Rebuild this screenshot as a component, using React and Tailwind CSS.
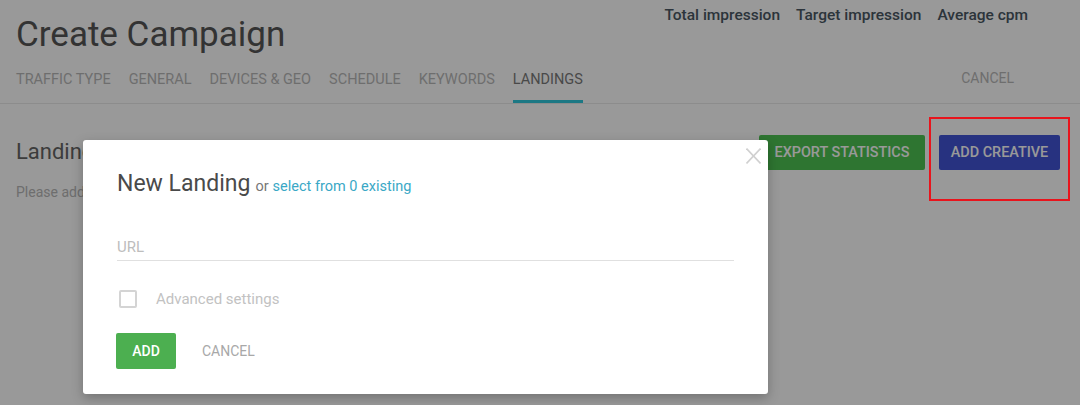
import React from "react";

const tabs = ["TRAFFIC TYPE", "GENERAL", "DEVICES & GEO", "SCHEDULE", "KEYWORDS", "LANDINGS"];

export default function App() {
  return (
    <div className="relative w-[1080px] h-[405px] overflow-hidden bg-white font-['Roboto',sans-serif]">
      {/* Header */}
      <div className="flex justify-between border-b border-[#e9e9e9] pl-4">
        <div className="flex flex-col">
          <h1 className="pt-[17px] text-[35px] leading-[36px] text-[#555] font-normal">Create Campaign</h1>
          <div className="mt-[17px] flex gap-[18px]">
            {tabs.map((t) => (
              <div
                key={t}
                className={
                  t === "LANDINGS"
                    ? "text-[14.5px] leading-[20px] pb-[10px] border-b-[3px] border-[#30c8dc] text-[#7a7a7a]"
                    : "text-[14.5px] leading-[20px] pb-[10px] border-b-[3px] border-transparent text-[#b8b8b8]"
                }
              >
                {t}
              </div>
            ))}
          </div>
        </div>
        <div className="flex flex-col items-end pr-[52px] pt-[5px]">
          <div className="flex gap-4 text-[15.5px] leading-[20px] font-medium text-[#4a5863]">
            <span>Total impression</span>
            <span>Target impression</span>
            <span>Average cpm</span>
          </div>
          <button className="mt-[43px] mr-[14px] text-[14px] leading-[20px] text-[#b8b8b8]">CANCEL</button>
        </div>
      </div>

      {/* Section */}
      <div className="flex justify-between pl-4 pr-5 pt-[31px]">
        <div className="flex flex-col">
          <h2 className="mt-[3px] text-[22px] leading-[28px] text-[#646464]">Landings</h2>
          <p className="mt-[16px] text-[14px] leading-[20px] text-[#b7b7b7]">Please add landings</p>
        </div>
        <div className="flex gap-[14px]">
          <button className="w-[166px] h-[35px] rounded-[2px] bg-[#4ec453] text-white text-[14.4px] font-medium">EXPORT STATISTICS</button>
          <button className="w-[121px] h-[35px] rounded-[2px] bg-[#4254d6] text-white text-[14.4px] font-medium">ADD CREATIVE</button>
        </div>
      </div>

      {/* Overlay */}
      <div className="absolute inset-0 bg-black/40" />

      {/* Annotation */}
      <div className="absolute left-[929px] top-[117px] w-[141px] h-[84px] border-2 border-[#e8141c]" />

      {/* Modal */}
      <div className="absolute left-[83px] top-[140px] w-[685px] rounded-[3px] bg-white px-[34px] pt-[30px] pb-[25px] shadow-[0_4px_12px_rgba(0,0,0,0.25)]">
        <button className="absolute right-[7px] top-[8px] w-[15px] h-[16px]">
          <svg width="15" height="16" viewBox="0 0 15 16" fill="none" stroke="#d0d0d0" strokeWidth="1.6">
            <line x1="0.5" y1="0.5" x2="14.5" y2="15.5" />
            <line x1="14.5" y1="0.5" x2="0.5" y2="15.5" />
          </svg>
        </button>
        <div className="flex items-baseline leading-[28px]">
          <span className="text-[23px] text-[#4a4a4a]">New Landing</span>
          <span className="ml-[5px] text-[14.5px] text-[#777]">or</span>
          <span className="ml-[4px] text-[14.5px] text-[#3aa8c6]">select from 0 existing</span>
        </div>
        <input
          placeholder="URL"
          className="mt-[36px] block w-full h-[24px] pb-[4px] border-b border-[#e0e0e0] text-[15px] outline-none placeholder:text-[#bdbdbd]"
        />
        <div className="mt-[29px] flex items-center h-[18px]">
          <div className="ml-[2px] w-[18px] h-[18px] border-2 border-[#d4d4d4] rounded-[2px]" />
          <span className="ml-[19px] text-[15px] leading-[18px] text-[#c2c2c2]">Advanced settings</span>
        </div>
        <div className="mt-[25px] flex items-center">
          <button className="-ml-px w-[60px] h-[36px] rounded-[2px] bg-[#4caf50] text-white text-[14px] font-medium">ADD</button>
          <button className="ml-[26px] text-[14px] text-[#a8a8a8]">CANCEL</button>
        </div>
      </div>
    </div>
  );
}
